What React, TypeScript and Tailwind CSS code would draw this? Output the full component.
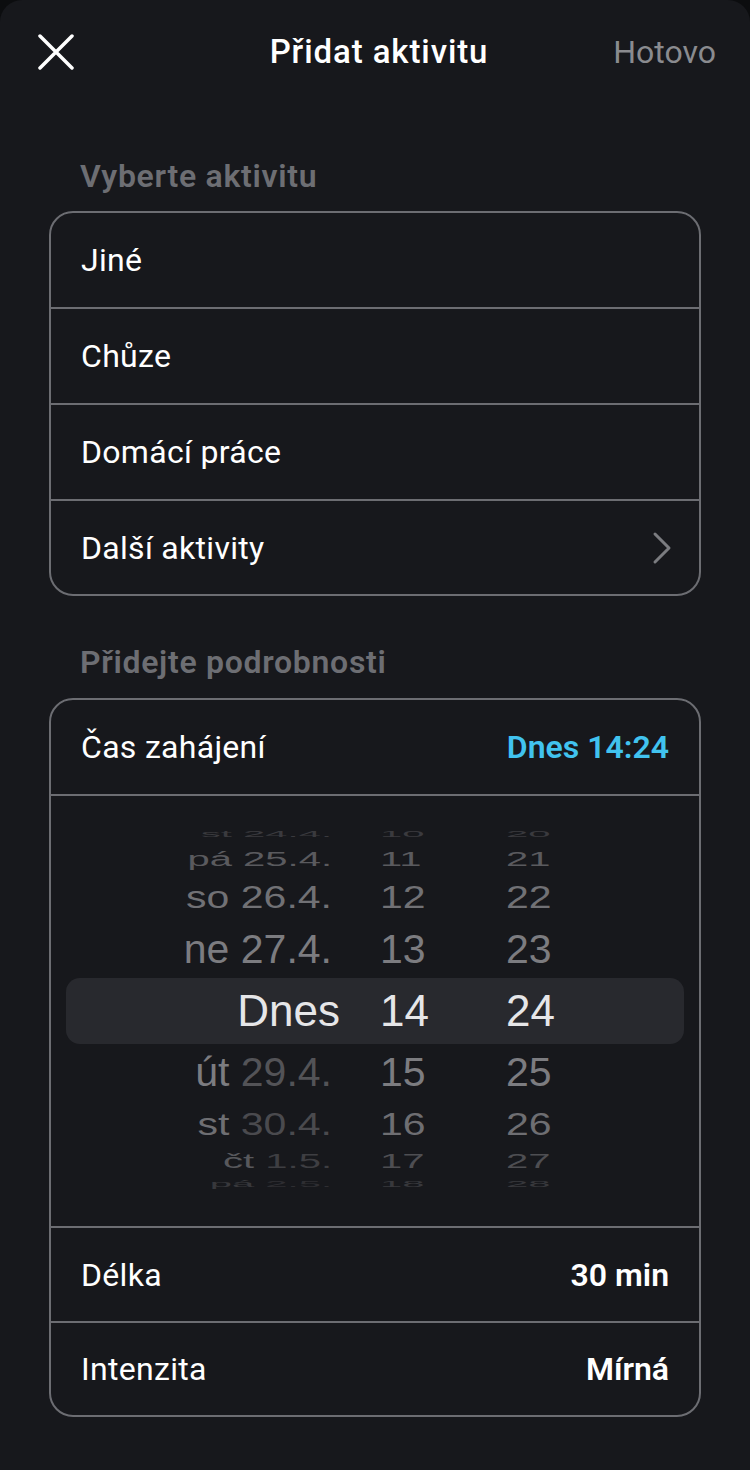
import React from "react";

type Part = { t: string; c: string };
type Row = {
  h: string;
  scale: string;
  size: string;
  date: Part[];
  hour: string;
  min: string;
  numColor: string;
  sel?: boolean;
};

const rows: Row[] = [
  { h: "h-[20px]", scale: "scale-y-[0.22]", size: "text-[40px]", date: [{ t: "st 24.4.", c: "text-[#3a3a3e]" }], hour: "10", min: "20", numColor: "text-[#3a3a3e]" },
  { h: "h-[30px]", scale: "scale-y-[0.5]", size: "text-[40px]", date: [{ t: "pá 25.4.", c: "text-[#5a5a5e]" }], hour: "11", min: "21", numColor: "text-[#5a5a5e]" },
  { h: "h-[47px]", scale: "scale-y-[0.78]", size: "text-[41px]", date: [{ t: "so 26.4.", c: "text-[#717175]" }], hour: "12", min: "22", numColor: "text-[#717175]" },
  { h: "h-[57px]", scale: "scale-y-[0.97]", size: "text-[41px]", date: [{ t: "ne 27.4.", c: "text-[#7c7c80]" }], hour: "13", min: "23", numColor: "text-[#7c7c80]" },
  { h: "h-[66px]", scale: "scale-y-[1]", size: "text-[44px]", date: [{ t: "Dnes", c: "text-[#e6e6e8]" }], hour: "14", min: "24", numColor: "text-[#e6e6e8]", sel: true },
  { h: "h-[57px]", scale: "scale-y-[0.97]", size: "text-[41px]", date: [{ t: "út ", c: "text-[#7c7c80]" }, { t: "29.4.", c: "text-[#535357]" }], hour: "15", min: "25", numColor: "text-[#7c7c80]" },
  { h: "h-[46px]", scale: "scale-y-[0.78]", size: "text-[41px]", date: [{ t: "st ", c: "text-[#6e6e72]" }, { t: "30.4.", c: "text-[#4a4a4e]" }], hour: "16", min: "26", numColor: "text-[#6e6e72]" },
  { h: "h-[28px]", scale: "scale-y-[0.5]", size: "text-[40px]", date: [{ t: "čt ", c: "text-[#58585c]" }, { t: "1.5.", c: "text-[#3e3e42]" }], hour: "17", min: "27", numColor: "text-[#4e4e52]" },
  { h: "h-[18px]", scale: "scale-y-[0.22]", size: "text-[40px]", date: [{ t: "pá ", c: "text-[#38383c]" }, { t: "2.5.", c: "text-[#2e2e32]" }], hour: "18", min: "28", numColor: "text-[#38383c]" },
];

function Chevron() {
  return (
    <svg width="20" height="34" viewBox="0 0 20 34" fill="none">
      <path d="M3 3 L17 17 L3 31" stroke="#7b7c80" strokeWidth="3" strokeLinecap="round" strokeLinejoin="round" />
    </svg>
  );
}

function ListRow({ label, last, chevron }: { label: string; last?: boolean; chevron?: boolean }) {
  return (
    <div className={`flex items-center justify-between pl-[30px] pr-[27px] ${last ? "h-[93px]" : "h-[96px] border-b-2 border-[#6c6d72]"}`}>
      <span className="text-[32px] tracking-[0.3px] text-white">{label}</span>
      {chevron && <Chevron />}
    </div>
  );
}

export default function App() {
  return (
    <div className="min-h-[1470px] w-[750px] bg-[#0c0d0f]" style={{ fontFamily: "Roboto, 'Noto Sans', sans-serif" }}>
      <div className="min-h-[1470px] rounded-t-[22px] bg-[#17181c] pb-[40px]">
        {/* Header */}
        <div className="grid h-[104px] grid-cols-[1fr_auto_1fr] items-center pl-[38px] pr-[34px]">
          <div className="flex">
            <svg width="36" height="36" viewBox="0 0 36 36" fill="none">
              <path d="M2 2 L34 34 M34 2 L2 34" stroke="#ffffff" strokeWidth="3.5" strokeLinecap="round" />
            </svg>
          </div>
          <span className="pl-[4px] text-[33px] font-medium tracking-[0.9px] text-white">Přidat aktivitu</span>
          <span className="justify-self-end text-[32px] text-[#8a8b8f]">Hotovo</span>
        </div>

        <div className="px-[49px] pt-[54px]">
          <div className="h-[36px] pl-[31px] text-[32px] font-semibold leading-[36px] tracking-[0.7px] text-[#6d6e73]">Vyberte aktivitu</div>
          <div className="mt-[17px] overflow-hidden rounded-[24px] border-2 border-[#6c6d72]">
            <ListRow label="Jiné" />
            <ListRow label="Chůze" />
            <ListRow label="Domácí práce" />
            <ListRow label="Další aktivity" last chevron />
          </div>

          <div className="mt-[48px] h-[36px] pl-[31px] text-[32px] font-semibold leading-[36px] tracking-[0.7px] text-[#6d6e73]">Přidejte podrobnosti</div>
          <div className="mt-[18px] overflow-hidden rounded-[24px] border-2 border-[#6c6d72]">
            <div className="flex h-[96px] items-center justify-between border-b-2 border-[#6c6d72] pl-[30px] pr-[30px]">
              <span className="text-[32px] tracking-[0.3px] text-white">Čas zahájení</span>
              <span className="text-[32px] font-semibold text-[#41c3ef]">Dnes 14:24</span>
            </div>

            {/* Picker */}
            <div className="flex h-[432px] flex-col border-b-2 border-[#6c6d72] pb-[35px] pt-[28px]" style={{ fontFamily: "'Liberation Sans', Arial, sans-serif" }}>
              {rows.map((r, i) => (
                <div
                  key={i}
                  className={`mx-[15px] flex shrink-0 items-center overflow-hidden ${r.h} ${r.sel ? "rounded-[14px] bg-[#28292e]" : ""}`}
                >
                  <div className={`flex w-[266px] shrink-0 justify-end ${r.scale}`}>
                    <span className={`${r.size} leading-none whitespace-pre ${r.sel ? "translate-x-[8px]" : ""}`}>
                      {r.date.map((p, j) => (
                        <span key={j} className={p.c}>{p.t}</span>
                      ))}
                    </span>
                  </div>
                  <div className={`ml-[48px] w-[126px] shrink-0 ${r.scale}`}>
                    <span className={`${r.size} leading-none ${r.numColor}`}>{r.hour}</span>
                  </div>
                  <div className={`shrink-0 ${r.scale}`}>
                    <span className={`${r.size} leading-none ${r.numColor}`}>{r.min}</span>
                  </div>
                </div>
              ))}
            </div>

            <div className="flex h-[95px] items-center justify-between border-b-2 border-[#6c6d72] pl-[30px] pr-[30px]">
              <span className="text-[32px] tracking-[0.3px] text-white">Délka</span>
              <span className="text-[32px] font-semibold text-white">30 min</span>
            </div>
            <div className="flex h-[92px] items-center justify-between pl-[30px] pr-[30px]">
              <span className="text-[32px] tracking-[0.3px] text-white">Intenzita</span>
              <span className="text-[32px] font-semibold text-white">Mírná</span>
            </div>
          </div>
        </div>
      </div>
    </div>
  );
}
